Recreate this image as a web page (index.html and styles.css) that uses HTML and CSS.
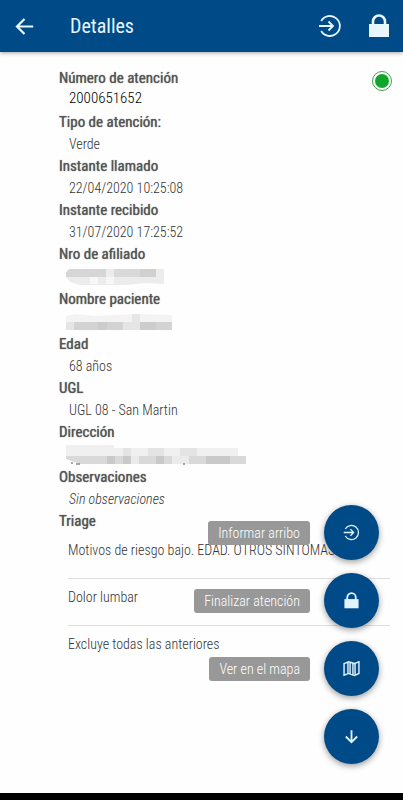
FILE: index.html
```html
<!DOCTYPE html>
<html lang="es">
<head>
    <meta charset="UTF-8">
    <meta name="viewport" content="width=device-width, initial-scale=1.0">
    <title>Detalles</title>
    <link rel="stylesheet" href="styles.css">
</head>
<body>

    <svg class="symbols" aria-hidden="true">
        <symbol id="icon-enter" viewBox="0 0 24 24">
            <path d="M3.2 7A10 10 0 1 1 3.2 17M1 12H15M10.5 7.5L15 12L10.5 16.5" fill="none" stroke="currentColor" stroke-width="1.8"/>
        </symbol>
        <symbol id="icon-lock" viewBox="0 0 24 24">
            <path d="M2 10H22V23H2Z" fill="currentColor"/>
            <path d="M6 11V7.5A6 6 0 0 1 18 7.5V11" fill="none" stroke="currentColor" stroke-width="2.6"/>
        </symbol>
        <symbol id="icon-map" viewBox="0 0 24 24">
            <path d="M1.5 5L8 2.5L16 5L22.5 2.5V19L16 22L8 19L1.5 21.5ZM7 3V19M10 3V20M14 5V21M17 5V21" fill="none" stroke="currentColor" stroke-width="2"/>
        </symbol>
        <symbol id="icon-down" viewBox="0 0 24 24">
            <path d="M12 3V20M4 12L12 20L20 12" fill="none" stroke="currentColor" stroke-width="2.6"/>
        </symbol>
        <symbol id="icon-back" viewBox="0 0 24 24">
            <path d="M23 12H3M12 2.5L2.5 12L12 21.5" fill="none" stroke="currentColor" stroke-width="2.8"/>
        </symbol>
    </svg>

    <header class="toolbar">
        <button class="icon-button" type="button" aria-label="Volver"><svg class="icon-back"><use href="#icon-back"/></svg></button>
        <h1>Detalles</h1>
        <button class="icon-button" type="button" aria-label="Informar arribo"><svg class="icon-top"><use href="#icon-enter"/></svg></button>
        <button class="icon-button" type="button" aria-label="Finalizar atención"><svg class="icon-top"><use href="#icon-lock"/></svg></button>
    </header>

    <main class="content">
        <span class="status"></span>
        <dl class="details">
            <dt>Número de atención</dt>
            <dd class="number">2000651652</dd>
            <dt>Tipo de atención:</dt>
            <dd>Verde</dd>
            <dt>Instante llamado</dt>
            <dd>22/04/2020 10:25:08</dd>
            <dt>Instante recibido</dt>
            <dd>31/07/2020 17:25:52</dd>
            <dt>Nro de afiliado</dt>
            <dd class="hidden-value">
                <svg width="98" height="16">
                    <path d="M0 4L3 0H98V15L80 14L60 16H14L4 13L0 8Z" fill="#ececec"/>
                    <path d="M0 4L3 0H40V8H0Z" fill="#d6d6d6"/>
                    <path d="M48 0H90V8H48Z" fill="#d9d9d9"/>
                    <path d="M74 0H90V8H74Z" fill="#d0d0d0"/>
                    <path d="M24 8H32V15H24ZM40 8H48V15H40Z" fill="#f6f6f6"/>
                </svg>
            </dd>
            <dt>Nombre paciente</dt>
            <dd class="hidden-value">
                <svg width="106" height="16">
                    <path d="M0 2L10 0L30 2L70 0L106 1V8H0Z" fill="#f3f3f3"/>
                    <path d="M66 0H74V8H66Z" fill="#e6e6e6"/>
                    <path d="M0 8H106V16H0Z" fill="#d3d3d3"/>
                    <path d="M0 8H8V16H0ZM57 8H74V16H57Z" fill="#e5e5e5"/>
                    <path d="M32 8H41V16H32ZM74 8H90V16H74Z" fill="#cccccc"/>
                </svg>
            </dd>
            <dt>Edad</dt>
            <dd>68 años</dd>
            <dt>UGL</dt>
            <dd>UGL 08 - San Martin</dd>
            <dt>Dirección</dt>
            <dd class="hidden-value">
                <svg width="180" height="20">
                    <path d="M0 0H48V3H172V11H0Z" fill="#f0f0f0"/>
                    <path d="M0 11H180V19H14L0 14Z" fill="#d9d9d9"/>
                    <path d="M41 11H49V19H41ZM57 11H65V19H57ZM90 11H98V19H90ZM140 11H164V19H140Z" fill="#c9c9c9"/>
                    <path d="M65 11H73V19H65ZM106 11H123V19H106Z" fill="#ebebeb"/>
                    <path d="M57 3H65V11H57ZM82 3H98V11H82ZM114 3H131V11H114Z" fill="#e4e4e4"/>
                    <path d="M6 17V19M10 19H14M118 18V20" stroke="#555" fill="none"/>
                </svg>
            </dd>
            <dt>Observaciones</dt>
            <dd><em>Sin observaciones</em></dd>
            <dt>Triage</dt>
        </dl>
        <ul class="triage">
            <li>Motivos de riesgo bajo. EDAD. OTROS SÍNTOMAS</li>
            <li>Dolor lumbar</li>
            <li>Excluye todas las anteriores</li>
        </ul>
    </main>

    <div class="fab-list">
        <div class="fab-row">
            <label class="fab-label" for="fabArribo">Informar arribo</label>
            <button class="fab" id="fabArribo" type="button"><svg><use href="#icon-enter"/></svg></button>
        </div>
        <div class="fab-row">
            <label class="fab-label" for="fabFinalizar">Finalizar atención</label>
            <button class="fab" id="fabFinalizar" type="button"><svg><use href="#icon-lock"/></svg></button>
        </div>
        <div class="fab-row">
            <label class="fab-label" for="fabMapa">Ver en el mapa</label>
            <button class="fab" id="fabMapa" type="button"><svg><use href="#icon-map"/></svg></button>
        </div>
        <div class="fab-row">
            <button class="fab" type="button" aria-label="Cerrar menú"><svg><use href="#icon-down"/></svg></button>
        </div>
    </div>

    <div class="nav-bar"></div>

</body>
</html>
```
FILE: styles.css
```css
* {
    box-sizing: border-box;
}

body {
    margin: 0;
    background-color: #fefefe;
    color: #333;
    font-family: "Roboto Condensed", Roboto, sans-serif;
    font-size: 14px;
    font-weight: 300;
}

button {
    padding: 0;
    border: none;
    background: none;
    color: inherit;
    font: inherit;
    cursor: pointer;
}

.symbols {
    display: none;
}

.toolbar {
    display: flex;
    align-items: center;
    gap: 25px;
    height: 52px;
    padding: 0 12px 0 15px;
    background-color: #004b87;
    color: #e8f6ff;
    box-shadow: 0 1px 4px rgba(0, 0, 0, 0.35);
}

.toolbar h1 {
    flex: 1;
    margin: 0 0 0 11px;
    font-size: 20px;
    font-weight: 400;
    line-height: 24px;
}

.icon-button {
    display: flex;
}

.icon-back {
    width: 19px;
    height: 19px;
}

.icon-top {
    width: 24px;
    height: 24px;
}

.content {
    position: relative;
    padding: 16px 13px 40px 59px;
}

.status {
    position: absolute;
    top: 19px;
    right: 11px;
    width: 20px;
    height: 20px;
    border: 1px solid #3aa548;
    border-radius: 50%;
    background: #12a52c content-box;
    padding: 2px;
}

.details {
    margin: 0;
}

.details dt {
    color: #555;
    font-size: 15px;
    font-weight: 400;
    line-height: 20px;
    text-shadow: 0 0 1px #555;
}

.details dd {
    height: 24px;
    margin: 0 0 0 10px;
    line-height: 24px;
}

.details .number {
    color: #000;
    font-size: 15px;
    line-height: 20px;
}

.details .hidden-value {
    display: flex;
    align-items: center;
    height: 25px;
    margin-left: 7px;
}

.triage {
    margin: 0;
    padding: 1px 0 0 9px;
    list-style: none;
}

.triage li {
    height: 47px;
    padding-top: 8px;
    border-bottom: 1px solid #dedede;
    line-height: 20px;
}

.triage li:last-child {
    border-bottom: none;
}

.fab-list {
    position: fixed;
    right: 24px;
    bottom: 36px;
    display: flex;
    flex-direction: column;
    gap: 13px;
}

.fab-row {
    display: flex;
    align-items: center;
    justify-content: flex-end;
    gap: 14px;
}

.fab-label {
    padding: 0 10px;
    border-radius: 3px;
    background-color: #989898;
    color: #fff;
    line-height: 24px;
}

.fab {
    display: flex;
    align-items: center;
    justify-content: center;
    width: 55px;
    height: 55px;
    border-radius: 50%;
    background-color: #004b87;
    color: #e0f3ff;
    box-shadow: 0 2px 6px rgba(0, 0, 0, 0.4);
}

.fab svg {
    width: 17px;
    height: 17px;
}

.nav-bar {
    position: fixed;
    right: 0;
    bottom: 0;
    left: 0;
    height: 7px;
    background-color: #000;
}
```
